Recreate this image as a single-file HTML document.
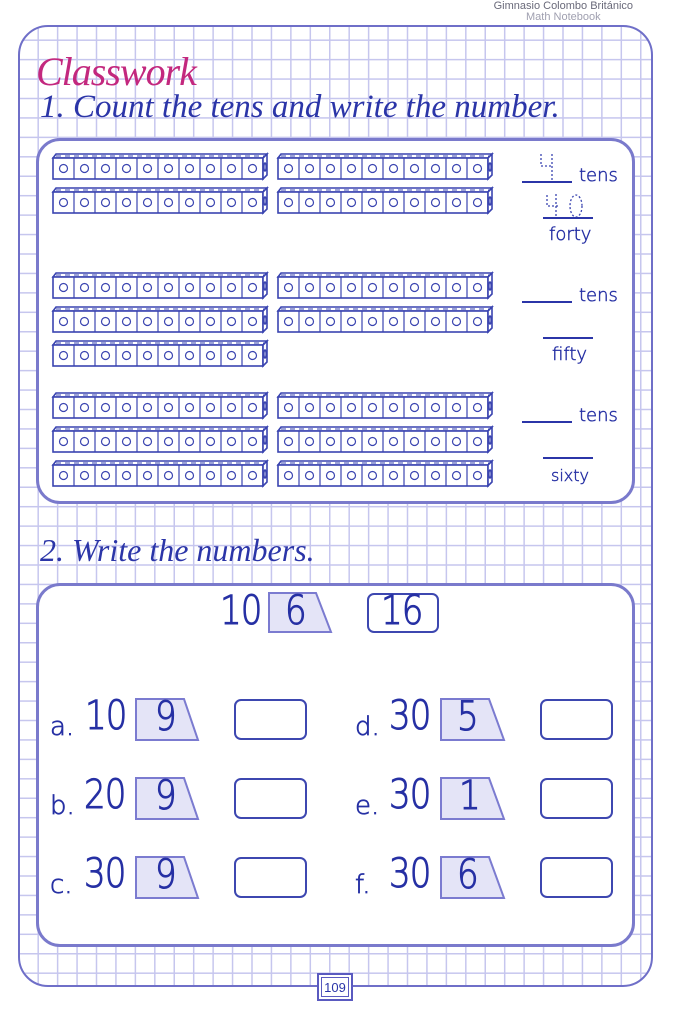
<!DOCTYPE html>
<html><head><meta charset="utf-8"><style>
*{margin:0;padding:0;box-sizing:border-box}
body{width:679px;height:1012px;background:#fff;position:relative;overflow:hidden;font-family:"Liberation Sans","DejaVu Sans",sans-serif;color:#2b35a8}
.hdr{position:absolute;right:46px;top:1px;font-size:11px;color:#6a6a7a;text-align:center;line-height:11px}
.hdr span{color:#a0a0b0}
.frame{position:absolute;left:18px;top:25px;width:635px;height:962px;border:2.5px solid #6f6fc8;border-radius:30px;
background-color:#fff;
background-image:linear-gradient(to right,#c6c6ee 1.5px,transparent 1.5px),linear-gradient(to bottom,#c6c6ee 1.5px,transparent 1.5px);
background-size:19.45px 19.45px;background-position:-2px -7px}
.box{position:absolute;background:#fff;border:3px solid #7a7acc;border-radius:24px}
.t{position:absolute;white-space:nowrap}
.cur{font-family:"Liberation Serif","DejaVu Serif",serif;font-style:italic;font-weight:normal}
.num{font-family:"DejaVu Sans","Liberation Sans",sans-serif;font-size:40px;font-weight:200;color:#2630a4;-webkit-text-stroke:1px #2630a4;transform:scaleX(.85);transform-origin:0 0;letter-spacing:-1px}
.lbl{font-family:"DejaVu Sans","Liberation Sans",sans-serif;font-weight:200;font-size:26px;color:#2630a4;-webkit-text-stroke:0.7px #2630a4}
.ans{position:absolute;width:73px;height:41px;border:2.5px solid #3d47b0;border-radius:7px;background:#fff}
.ln{position:absolute;height:2px;background:#2b35a8}
.sm{font-family:"DejaVu Sans","Liberation Sans",sans-serif;font-weight:200;font-size:18px;color:#2630a4;-webkit-text-stroke:0.5px #2630a4}
</style></head><body>
<div class="hdr">Gimnasio Colombo Británico<br><span>Math Notebook</span></div>
<div class="frame"></div>
<div class="t cur" style="left:36px;top:48px;font-size:40px;color:#c3287e;letter-spacing:-1px">Classwork</div>
<div class="t cur" style="left:40px;top:89px;font-size:33px;color:#2b35a8">1. Count the tens and write the number.</div>

<div class="box" style="left:36px;top:138px;width:599px;height:366px"></div>

<svg width="679" height="1012" style="position:absolute;left:0;top:0">
<defs>
<g id="rod" fill="#fff" stroke="#3a44b0" stroke-width="1.6">
<polygon points="0,4 3,0 214,0 210,4"/>
<rect x="0" y="4" width="210" height="21"/>
<polygon points="210,4 214,0 214,21 210,25"/>
<ellipse cx="212" cy="13" rx="1.2" ry="4"/>
<g stroke-width="1.2">
<line x1="21" y1="4" x2="21" y2="25"/><line x1="42" y1="4" x2="42" y2="25"/><line x1="63" y1="4" x2="63" y2="25"/><line x1="84" y1="4" x2="84" y2="25"/><line x1="105" y1="4" x2="105" y2="25"/><line x1="126" y1="4" x2="126" y2="25"/><line x1="147" y1="4" x2="147" y2="25"/><line x1="168" y1="4" x2="168" y2="25"/><line x1="189" y1="4" x2="189" y2="25"/>
<circle cx="10.5" cy="14.5" r="4"/><circle cx="31.5" cy="14.5" r="4"/><circle cx="52.5" cy="14.5" r="4"/><circle cx="73.5" cy="14.5" r="4"/><circle cx="94.5" cy="14.5" r="4"/><circle cx="115.5" cy="14.5" r="4"/><circle cx="136.5" cy="14.5" r="4"/><circle cx="157.5" cy="14.5" r="4"/><circle cx="178.5" cy="14.5" r="4"/><circle cx="199.5" cy="14.5" r="4"/>
</g>
<line x1="3" y1="2" x2="212" y2="2" stroke-dasharray="5 4" stroke-width="1"/>
</g>
</defs>
<use href="#rod" x="53" y="154"/><use href="#rod" x="278" y="154"/>
<use href="#rod" x="53" y="188"/><use href="#rod" x="278" y="188"/>
<use href="#rod" x="53" y="273"/><use href="#rod" x="278" y="273"/>
<use href="#rod" x="53" y="307"/><use href="#rod" x="278" y="307"/>
<use href="#rod" x="53" y="341"/>
<use href="#rod" x="53" y="393"/><use href="#rod" x="278" y="393"/>
<use href="#rod" x="53" y="427"/><use href="#rod" x="278" y="427"/>
<use href="#rod" x="53" y="461"/><use href="#rod" x="278" y="461"/>
<g fill="none" stroke="#3a44b0" stroke-width="1.3" stroke-dasharray="2 2">
<path d="M541 154 V166 H552 M552 154 V180"/>
<path d="M547 195 V206 H558 M556 194 V218"/>
<ellipse cx="576" cy="206" rx="6" ry="11"/>
</g>
</svg>

<div class="ln" style="left:522px;top:181px;width:50px"></div>
<div class="t sm" style="left:579px;top:165px">tens</div>
<div class="ln" style="left:543px;top:217px;width:50px"></div>
<div class="t sm" style="left:549px;top:224px">forty</div>
<div class="ln" style="left:522px;top:301px;width:50px"></div>
<div class="t sm" style="left:579px;top:285px">tens</div>
<div class="ln" style="left:543px;top:337px;width:50px"></div>
<div class="t sm" style="left:552px;top:344px">fifty</div>
<div class="ln" style="left:522px;top:421px;width:50px"></div>
<div class="t sm" style="left:579px;top:405px">tens</div>
<div class="ln" style="left:543px;top:457px;width:50px"></div>
<div class="t sm" style="left:551px;top:466px;font-size:16px">sixty</div>

<div class="t cur" style="left:40px;top:532px;font-size:32px;color:#2b35a8">2. Write the numbers.</div>

<div class="box" style="left:36px;top:583px;width:599px;height:364px"></div>

<svg width="679" height="1012" style="position:absolute;left:0;top:0">
<g fill="#e4e4f7" stroke="#7b7bd0" stroke-width="2">
<polygon points="269,593 316,593 331,632 269,632"/>
<polygon points="136,699 184,699 198,740 136,740"/>
<polygon points="136,778 184,778 198,819 136,819"/>
<polygon points="136,857 184,857 198,898 136,898"/>
<polygon points="441,699 489,699 504,740 441,740"/>
<polygon points="441,778 489,778 504,819 441,819"/>
<polygon points="441,857 489,857 504,898 441,898"/>
</g>
</svg>

<div class="t num" style="left:220px;top:588px">10</div>
<div class="t num" style="left:285px;top:588px">6</div>
<div class="ans" style="left:367px;top:593px;width:72px;height:40px;border-width:2px"></div>
<div class="t num" style="left:381px;top:588px">16</div>

<div class="t lbl" style="left:50px;top:712px">a.</div>
<div class="t num" style="left:85px;top:693px">10</div>
<div class="t num" style="left:155px;top:694px">9</div>
<div class="ans" style="left:234px;top:699px"></div>

<div class="t lbl" style="left:50px;top:791px">b.</div>
<div class="t num" style="left:84px;top:772px">20</div>
<div class="t num" style="left:155px;top:773px">9</div>
<div class="ans" style="left:234px;top:778px"></div>

<div class="t lbl" style="left:50px;top:870px">c.</div>
<div class="t num" style="left:84px;top:851px">30</div>
<div class="t num" style="left:155px;top:852px">9</div>
<div class="ans" style="left:234px;top:857px"></div>

<div class="t lbl" style="left:355px;top:712px">d.</div>
<div class="t num" style="left:389px;top:693px">30</div>
<div class="t num" style="left:457px;top:694px">5</div>
<div class="ans" style="left:540px;top:699px"></div>

<div class="t lbl" style="left:355px;top:791px">e.</div>
<div class="t num" style="left:389px;top:772px">30</div>
<div class="t num" style="left:459px;top:773px">1</div>
<div class="ans" style="left:540px;top:778px"></div>

<div class="t lbl" style="left:355px;top:870px">f.</div>
<div class="t num" style="left:389px;top:851px">30</div>
<div class="t num" style="left:457px;top:852px">6</div>
<div class="ans" style="left:540px;top:857px"></div>

<div style="position:absolute;left:317px;top:973px;width:36px;height:28px;border:2px solid #5a5ac0;background:#fff;padding:2px">
<div style="border:1.5px solid #5a5ac0;height:100%;font-size:13px;text-align:center;line-height:20px;color:#2b35a8">109</div></div>
</body></html>
